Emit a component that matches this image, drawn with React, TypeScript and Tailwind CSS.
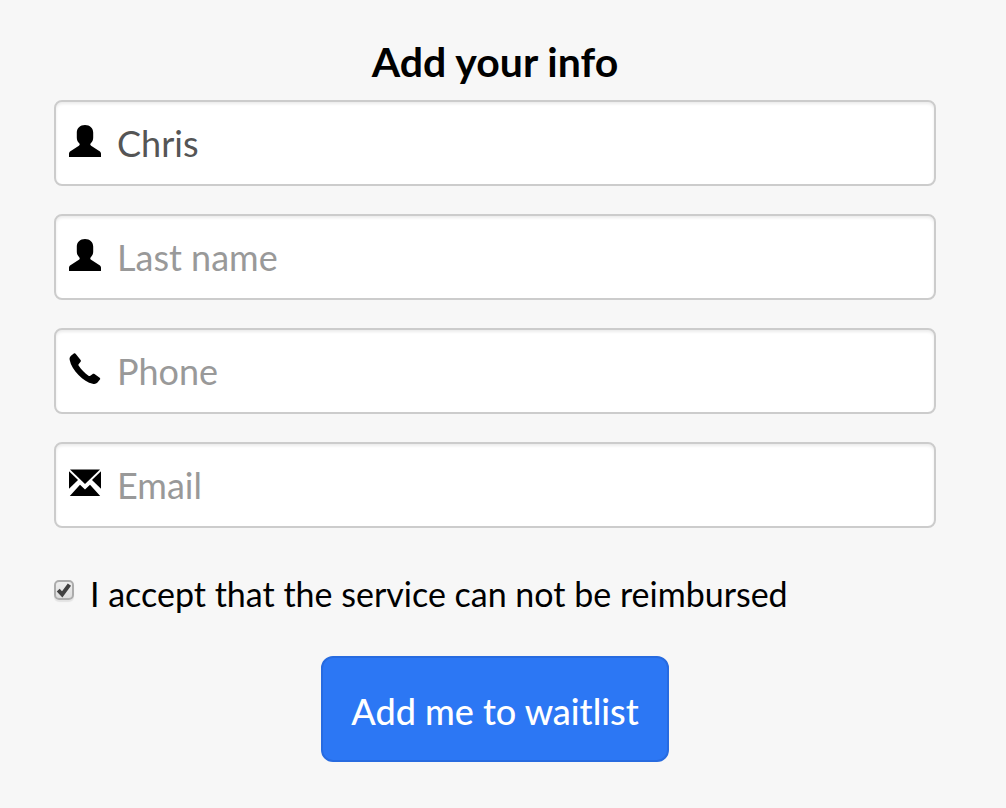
import { useState, type ReactNode } from 'react';

interface FieldProps {
  id: string;
  label: string;
  type?: string;
  initialValue?: string;
  icon: ReactNode;
}

function UserIcon() {
  return (
    <svg viewBox="0 0 32 32" className="w-8 h-8 shrink-0" fill="currentColor" aria-hidden="true">
      <path d="M16 0C11 0 7.800 3.200 7.800 7.600v4.800c0 2.400.8 4.200 2.200 5.600 1 1 1 2-.1 2.700L1.800 26C.6 26.800 0 27.600 0 28.800V32h32v-3.200c0-1.200-.6-2-1.800-2.800l-8.100-5.300c-1.100-.7-1.100-1.700-.1-2.700 1.400-1.400 2.200-3.200 2.200-5.600V7.600C24.200 3.200 21 0 16 0z" />
    </svg>
  );
}

function PhoneIcon() {
  return (
    <svg viewBox="0 0 32 32" className="w-8 h-8 shrink-0" fill="currentColor" aria-hidden="true">
      <path d="M6.600.8c-.5-.6-1.200-.7-1.800-.2L2 2.800C.7 3.900.3 5.300.7 7c1 5.200 4.400 10.600 8.800 15 4.600 4.600 9.500 7.900 14.200 8.800 2 .4 3.600.1 4.800-1.200l2.400-3c.5-.6.4-1.400-.2-1.900l-5.200-3.600c-.7-.5-1.500-.5-2.100.1l-2.100 1.600c-.5.4-1.200.4-1.800 0-4.100-2.900-7.200-6.100-9.900-10.200-.4-.7-.3-1.200.2-1.700l1.600-1.900c.6-.6.7-1.400.2-2.100z" />
    </svg>
  );
}

function MailIcon() {
  return (
    <svg viewBox="0 0 32 32" className="w-8 h-8 shrink-0" fill="currentColor" aria-hidden="true">
      <path d="M1 2.500h30L16 17z" />
      <path d="M0 4.200v17.600l9-8.800z" />
      <path d="M32 4.200v17.600L23 13z" />
      <path d="M.8 29h30.400L21 17.800l-5 4.800-5-4.800z" />
    </svg>
  );
}

function Field({ id, label, type = 'text', initialValue = '', icon }: FieldProps) {
  const [value, setValue] = useState(initialValue);

  return (
    <div className="flex items-center gap-4 h-[86px] pl-[13px] pr-3 pb-1 bg-white border-2 border-[#cccccc] rounded-lg shadow-[inset_0_2px_3px_rgba(0,0,0,0.08)]">
      <label htmlFor={id} aria-label={label}>
        {icon}
      </label>
      <input
        id={id}
        type={type}
        value={value}
        placeholder={label}
        onChange={(e) => setValue(e.target.value)}
        className="flex-1 min-w-0 pt-1 bg-transparent text-4xl text-[#555555] placeholder:text-[#999999] outline-none"
      />
    </div>
  );
}

export default function App() {
  const [accepted, setAccepted] = useState(true);

  return (
    <main className="min-h-screen bg-[#f7f7f7] pt-[38px] pb-11 pl-[54px] pr-[70px] font-['Lato',sans-serif] text-black">
      <form onSubmit={(e) => e.preventDefault()}>
        <h1 className="mb-[14px] text-center text-[41px] leading-12 font-bold">Add your info</h1>

        <div className="flex flex-col gap-7">
          <Field id="first-name" label="First name" initialValue="Chris" icon={<UserIcon />} />
          <Field id="last-name" label="Last name" icon={<UserIcon />} />
          <Field id="phone" label="Phone" type="tel" icon={<PhoneIcon />} />
          <Field id="email" label="Email" type="email" icon={<MailIcon />} />
        </div>

        <div className="flex items-start gap-4 mt-[42px]">
          <span className="relative mt-[10px] w-5 h-5 shrink-0">
            <input
              id="accept"
              type="checkbox"
              checked={accepted}
              onChange={(e) => setAccepted(e.target.checked)}
              className="block w-5 h-5 appearance-none rounded-[5px] border-2 border-[#acacac] bg-linear-to-b from-[#eeeeee] to-[#dddddd] shadow-[0_2px_1px_rgba(0,0,0,0.08)]"
            />
            {accepted && (
              <svg viewBox="0 0 20 20" className="absolute inset-0 w-5 h-5 pointer-events-none" aria-hidden="true">
                <path d="M4.200 10.200l4 4.200L15.400 4.600" fill="none" stroke="#404040" strokeWidth="4" />
              </svg>
            )}
          </span>
          <label htmlFor="accept" className="text-[34px] leading-12">
            I accept that the service can not be reimbursed
          </label>
        </div>

        <div className="flex justify-center mt-[38px]">
          <button
            type="submit"
            className="px-7 pt-1 h-[106px] rounded-xl border-2 border-[#276be0] bg-[#2c77f4] text-4xl font-medium text-white cursor-pointer"
          >
            Add me to waitlist
          </button>
        </div>
      </form>
    </main>
  );
}
